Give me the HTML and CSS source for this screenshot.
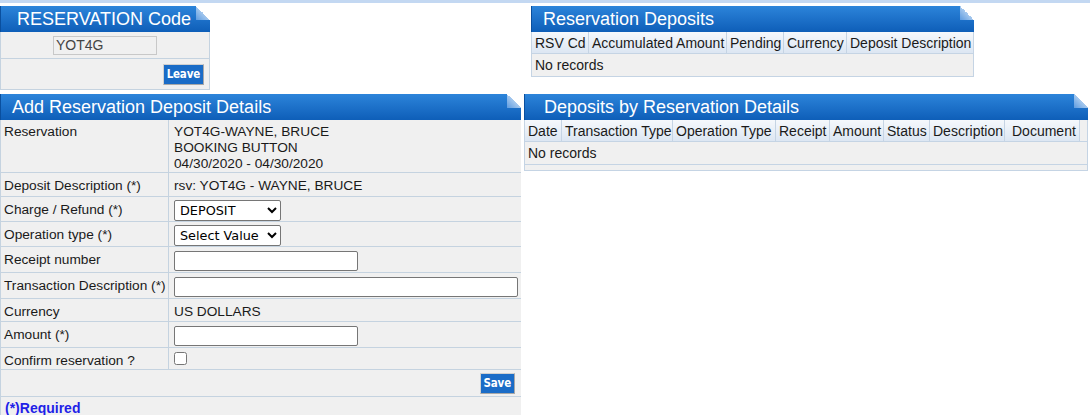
FILE: index.html
```html
<!DOCTYPE html>
<html lang="en">
<head>
    <meta charset="UTF-8">
    <title>Reservation Deposits</title>
    <link rel="stylesheet" href="styles.css">
</head>
<body>
    <div class="topbar"></div>

    <div class="row row-top">
        <div class="panel panel-code">
            <div class="panel-head">RESERVATION Code</div>
            <div class="code-body">
                <div class="code-line">
                    <input type="text" class="code-input" value="YOT4G" readonly>
                </div>
                <div class="code-line code-actions">
                    <button class="btn">Leave</button>
                </div>
            </div>
        </div>

        <div class="panel panel-deposits">
            <div class="panel-head">Reservation Deposits</div>
            <table class="grid">
                <colgroup>
                    <col class="c57"><col class="c138"><col class="c57"><col class="c63"><col>
                </colgroup>
                <thead>
                    <tr>
                        <th>RSV Cd</th>
                        <th>Accumulated Amount</th>
                        <th>Pending</th>
                        <th>Currency</th>
                        <th>Deposit Description</th>
                    </tr>
                </thead>
                <tbody>
                    <tr><td colspan="5">No records</td></tr>
                </tbody>
            </table>
        </div>
    </div>

    <div class="row row-main">
        <div class="panel panel-add">
            <div class="panel-head">Add Reservation Deposit Details</div>
            <div class="form-body">
                <div class="f-row h-resv">
                    <div class="f-lbl">Reservation</div>
                    <div class="f-val">YOT4G-WAYNE, BRUCE<br>BOOKING BUTTON<br>04/30/2020 - 04/30/2020</div>
                </div>
                <div class="f-row h-24">
                    <div class="f-lbl">Deposit Description (*)</div>
                    <div class="f-val">rsv: YOT4G - WAYNE, BRUCE</div>
                </div>
                <div class="f-row h-25">
                    <div class="f-lbl">Charge / Refund (*)</div>
                    <div class="f-val">
                        <select class="sel">
                            <option>DEPOSIT</option>
                            <option>REFUND</option>
                        </select>
                    </div>
                </div>
                <div class="f-row h-25">
                    <div class="f-lbl">Operation type (*)</div>
                    <div class="f-val">
                        <select class="sel">
                            <option>Select Value</option>
                        </select>
                    </div>
                </div>
                <div class="f-row h-26">
                    <div class="f-lbl">Receipt number</div>
                    <div class="f-val"><input type="text" class="txt txt-short"></div>
                </div>
                <div class="f-row h-26">
                    <div class="f-lbl">Transaction Description (*)</div>
                    <div class="f-val"><input type="text" class="txt txt-long"></div>
                </div>
                <div class="f-row h-23">
                    <div class="f-lbl">Currency</div>
                    <div class="f-val">US DOLLARS</div>
                </div>
                <div class="f-row h-26">
                    <div class="f-lbl">Amount (*)</div>
                    <div class="f-val"><input type="text" class="txt txt-short"></div>
                </div>
                <div class="f-row h-22">
                    <div class="f-lbl">Confirm reservation ?</div>
                    <div class="f-val"><input type="checkbox" class="chk"></div>
                </div>
                <div class="f-row f-save">
                    <button class="btn">Save</button>
                </div>
                <div class="f-note">(*)Required</div>
            </div>
        </div>

        <div class="panel panel-list">
            <div class="panel-head">Deposits by Reservation Details</div>
            <table class="grid">
                <colgroup>
                    <col class="c37"><col class="c111"><col class="c103"><col class="c54"><col class="c54"><col class="c46"><col class="c75"><col class="c75"><col>
                </colgroup>
                <thead>
                    <tr>
                        <th>Date</th>
                        <th>Transaction Type</th>
                        <th>Operation Type</th>
                        <th>Receipt</th>
                        <th>Amount</th>
                        <th>Status</th>
                        <th>Description</th>
                        <th class="doc">Document</th>
                        <th class="spare"></th>
                    </tr>
                </thead>
                <tbody>
                    <tr><td colspan="9">No records</td></tr>
                    <tr class="foot"><td colspan="9"></td></tr>
                </tbody>
            </table>
        </div>
    </div>
</body>
</html>
```

FILE: styles.css
```css
body { margin: 0; font-family: "Liberation Sans", Arial, sans-serif; font-size: 14px; color: #1a1a1a; background: #fff; }
.topbar { height: 3px; background: #c3d8f2; }

.row { display: flex; align-items: flex-start; }
.row-top { margin-top: 3px; }
.row-main { margin-top: 4px; }

.panel { background: #f0f0f0; }
.panel-code { width: 210px; }
.panel-deposits { width: 443px; margin-left: 321px; border-bottom: 1px solid #c5d4e4; }
.panel-add { width: 521px; }
.panel-list { width: 564px; margin-left: 3px; }

.panel-head { position: relative; height: 26px; line-height: 26px; padding-left: 11px; color: #fff; font-size: 18px; background: linear-gradient(#2c84da, #0e5eb8); border-left: 1px solid #0a4f9e; }
.panel-head::after { content: ""; position: absolute; top: 0; right: 0; width: 14px; height: 14px; background: linear-gradient(to bottom left, #fff 50%, #a5c8ee 50%, #5d9be0); }
.panel-code .panel-head { padding-left: 16px; }
.panel-list .panel-head { padding-left: 19px; }

.code-body { border: 1px solid #c5d3e0; border-top: 0; }
.code-line { height: 26px; display: flex; align-items: center; justify-content: center; border-bottom: 1px solid #c5d3e0; }
.code-actions { height: 30px; border-bottom: 0; justify-content: flex-end; padding-right: 5px; }
.code-input { width: 104px; height: 19px; box-sizing: border-box; padding: 0 2px; border: 1px solid #c8c8c8; background: #f0f0f0; color: #444; font-family: "Liberation Sans", Arial, sans-serif; font-size: 14px; }

.btn { height: 21px; padding: 0 3px; border: 1px solid #a8a8a8; border-top-color: #d0d0d0; border-left-color: #d0d0d0; background: #1a6cc7; color: #fff; font-family: "DejaVu Sans Condensed", "DejaVu Sans", sans-serif; font-weight: bold; font-size: 11.5px; letter-spacing: -0.2px; cursor: pointer; }

.grid { width: 100%; table-layout: fixed; border-collapse: collapse; border-left: 1px solid #c5d4e4; border-right: 1px solid #c5d4e4; }
.grid th { height: 21px; padding: 0 3px; font-weight: normal; text-align: left; white-space: nowrap; overflow: hidden; background: linear-gradient(#f5f8fc, #dce6f2); border-right: 1px solid #c5d4e4; border-bottom: 1px solid #c5d4e4; }
.grid th:last-child { border-right: 0; }
.grid td { height: 22px; padding: 0 3px; background: #f0f0f0; }
.c37 { width: 37px; }
.c46 { width: 46px; }
.c54 { width: 54px; }
.c57 { width: 57px; }
.c63 { width: 63px; }
.c75 { width: 75px; }
.c103 { width: 103px; }
.c111 { width: 111px; }
.c138 { width: 138px; }
.panel-list .grid th.doc { padding-left: 7px; }
.panel-list .grid th.spare { padding: 0; background: #f0f0f0; border-right: 0; }
.panel-list .grid td { border-bottom: 1px solid #c5d4e4; }
.panel-list .grid tr.foot td { height: 5px; padding: 0; }

.form-body { border-left: 1px solid #c5d3e0; font-size: 13.7px; }
.f-row { display: flex; box-sizing: border-box; border-bottom: 1px solid #c5d3e0; line-height: 16px; }
.f-lbl { width: 168px; flex: none; box-sizing: border-box; padding: 5px 0 0 3px; border-right: 1px solid #c5d3e0; white-space: nowrap; }
.f-val { flex: 1; padding: 5px 0 0 5px; }
.h-resv { height: 53px; }
.h-resv .f-val, .h-resv .f-lbl { padding-top: 4px; }
.h-22 { height: 22px; }
.h-23 { height: 23px; }
.h-24 { height: 24px; }
.h-25 { height: 25px; }
.h-26 { height: 26px; }
.f-save { height: 27px; justify-content: flex-end; align-items: center; padding-right: 6px; }
.f-note { padding: 3px 0 0 4px; color: #1f1fe8; font-weight: bold; font-size: 14px; }

.sel { display: block; width: 107px; height: 21px; margin-top: -2px; padding: 0 1px; border: 1px solid #767676; border-radius: 2px; background: #fff; color: #000; font-family: "DejaVu Sans", sans-serif; font-size: 12.8px; }
.txt { display: block; height: 20px; box-sizing: border-box; margin: -1px 0 0; border: 1px solid #767676; border-radius: 2px; background: #fff; }
.txt-short { width: 184px; }
.txt-long { width: 344px; }
.chk { display: block; width: 13px; height: 13px; margin: -1px 0 0; }
```
